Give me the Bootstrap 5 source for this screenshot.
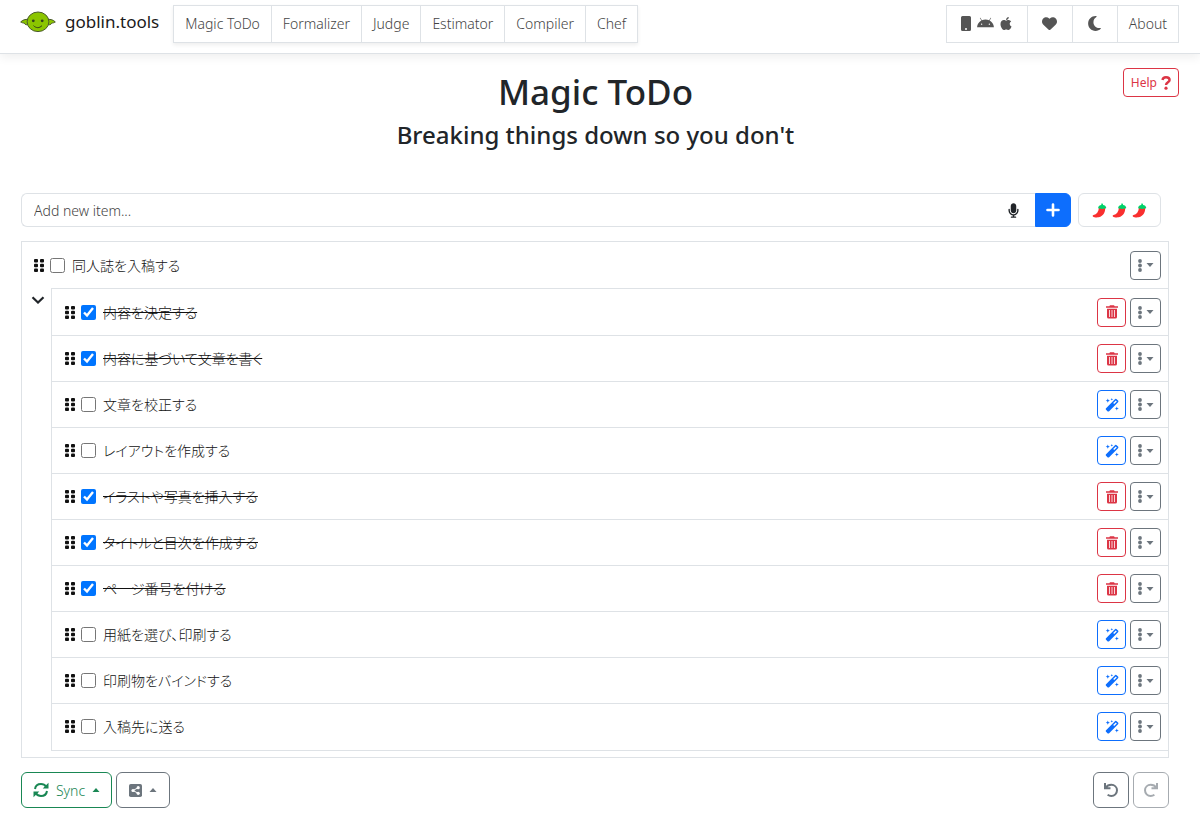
<!DOCTYPE html>
<html lang="en">
<head>
<meta charset="utf-8">
<meta name="viewport" content="width=device-width, initial-scale=1">
<title>Magic ToDo - goblin.tools</title>
<link href="https://cdn.jsdelivr.net/npm/bootstrap@5.3.0/dist/css/bootstrap.min.css" rel="stylesheet">
<style>
  body { font-family: "Noto Sans", "Noto Sans CJK JP", sans-serif; font-size: 14px; }
  svg { display: block; fill: currentColor; }
  .topbar { height: 54px; padding: 5px 21px 0 20px; box-shadow: 0 3px 10px rgba(0,0,0,.07); }
  .brand-link { font-size: 17px; line-height: 34px; color: #1a1a1a; gap: 9px; margin-right: 14px; }
  .tab-link { height: 38px; padding: 0 11px 2px; border: 1px solid #dee2e6; color: #444; font-weight: 300; background: #fff; display: flex; align-items: center; justify-content: center; gap: 6px; text-decoration: none; }
  .tab-link + .tab-link { margin-left: -1px; }
  .tab-group { box-shadow: 0 2px 4px rgba(0,0,0,.07); }
  .tab-icon { width: 46px; color: #555; }
  .tab-wide { width: 82px; color: #555; }
  .page-title { font-size: 35px; line-height: 44px; font-weight: 500; }
  .page-sub { font-size: 24px; line-height: 34px; font-weight: 500; }
  .title-block { padding: 16px 9px 0 0; margin-bottom: 41px; }
  .help-btn { top: 14px; right: 21px; height: 29px; font-size: 12px; padding: 0 7px; gap: 4px; }
  .page-body { padding: 0 31px 0 21px; }
  .entry-row { margin-right: 8px; height: 34px; }
  .entry-box { border: 1px solid #dee2e6; border-radius: 6px 0 0 6px; border-right: 0; }
  .entry-box input { font-size: 14px; font-weight: 300; padding: 0 12px; border: 0; background: none; box-shadow: none !important; }
  .entry-box input::placeholder { color: #444; }
  .add-btn { width: 36px; border-radius: 0 6px 6px 0; margin-right: 7px; }
  .spice-btn { width: 83px; border: 1px solid #dee2e6; border-radius: 6px; gap: 5px; }
  .task-list { border: 1px solid #dee2e6; margin-top: 14px; padding-bottom: 6px; }
  .task-line { height: 46px; padding-left: 12px; padding-right: 7px; }
  .task-line label { font-feature-settings: "palt", "kern"; font-family: "Noto Sans CJK JP", sans-serif; font-weight: 300; font-size: 14px; margin-left: 7px; color: #111; }
  .task-line input[type=checkbox] { width: 15px; height: 15px; margin: 0 0 0 5px; accent-color: #0075ff; }
  .grip { width: 11px; height: 13px; color: #111; }
  .sub-list { border: 1px solid #dee2e6; border-right: 0; padding-bottom: 1px; }
  .sub-list .task-line { padding-left: 13px; }
  .sub-list .task-line + .task-line { border-top: 1px solid #dee2e6; }
  .fold-btn { width: 29px; padding: 8px 0 0 9px; }
  .done-text { text-decoration: line-through; }
  .icon-btn { width: 29px; height: 29px; border-radius: 4px; }
  .more-btn { width: 31px; height: 29px; border-radius: 4px; margin-left: 4px; gap: 4px; }
  .foot-row { margin-top: 14px; padding-bottom: 24px; }
  .foot-btn { height: 36px; border-radius: 6px; font-size: 14px; font-weight: 300; }
  .foot-btn.sync { width: 91px; gap: 7px; }
  .foot-btn.share { width: 54px; gap: 7px; }
  .foot-btn.square { width: 36px; }
  .foot-btn.square:disabled { opacity: .6; }
  .centered { display: flex; align-items: center; justify-content: center; padding: 0; }
</style>
</head>
<body>
<svg class="d-none" aria-hidden="true">
  <symbol id="i-grip" viewBox="0 0 11 13"><rect width="4" height="3.4" rx="1"/><rect x="6" width="4" height="3.4" rx="1"/><rect y="4.8" width="4" height="3.4" rx="1"/><rect x="6" y="4.8" width="4" height="3.4" rx="1"/><rect y="9.6" width="4" height="3.4" rx="1"/><rect x="6" y="9.6" width="4" height="3.4" rx="1"/></symbol>
  <symbol id="i-dots" viewBox="0 0 4 13"><circle cx="2" cy="2" r="1.9"/><circle cx="2" cy="6.5" r="1.9"/><circle cx="2" cy="11" r="1.9"/></symbol>
  <symbol id="i-down" viewBox="0 0 8 4"><path d="M.5 0h7L4 4z"/></symbol>
  <symbol id="i-up" viewBox="0 0 8 4"><path d="M.5 4h7L4 0z"/></symbol>
  <symbol id="i-trash" viewBox="0 0 12 14"><path fill-rule="evenodd" d="M4 .2h4l.7 1H12v1.600H0V1.200h3.300zM1 3.700h10v8.300a1.600 1.600 0 0 1-1.600 1.600H2.600A1.600 1.600 0 0 1 1 12zM3.200 5v7h.8V5zm2.400 0v7h.8V5zM8 5v7h.8V5z"/></symbol>
  <symbol id="i-wand" viewBox="0 0 14 14"><path fill-rule="evenodd" d="M9.700 1.400a1.500 1.500 0 0 1 2.200 0l.9.900a1.500 1.500 0 0 1 0 2.200L4.400 13a1.500 1.500 0 0 1-2.200 0l-.9-.9a1.500 1.500 0 0 1 0-2.200zM10.800 2.500 8.200 5.100l1 1L11.800 3.500z"/><path d="m2.800.6.6 1.500 1.500.6-1.500.6-.6 1.500-.6-1.500-1.500-.6 1.500-.6zM6.800 0l.4.9.9.4-.9.4-.4.9-.4-.9-.9-.4.9-.4zM11.800 8.400l.6 1.500 1.500.6-1.500.6-.6 1.500-.6-1.500-1.500-.6 1.500-.6z"/></symbol>
  <symbol id="i-pepper" viewBox="0 0 14 15"><path fill="#f92f2f" d="M6.500 4.500 12.500 4.600c.8 4-1.500 8.800-6.200 9.700C3.800 14.700 1.300 14.300.4 13.500c-.5-.5-.1-1.300.6-1.400C4.200 11.600 6 9 6.500 4.500z"/><path fill="#00d26a" d="M8.800.7c.9-.5 1.800 0 1.700 1.200 1.700.1 3 1.200 3.200 2.700.1 1-.9 1.300-1.700.7-.6.900-1.600.9-2.200.1-.7.900-1.700.8-2.200-.1-.9.700-2.100.3-1.900-.7.300-1.500 1.500-2.500 3.100-2.600z"/></symbol>
</svg>

<header class="topbar d-flex align-items-start border-bottom bg-white">
  <a href="#" class="brand-link d-flex align-items-center text-decoration-none">
    <svg width="36" height="22" viewBox="0 0 36 22" aria-hidden="true"><g fill="#8bc500" stroke="#4a5a2c" stroke-width="1"><path d="M8 8.500C5.500 8 2.500 9 .7 11c1.500 1 2.600.9 3.600 1.200C5.200 14 7 14.200 9 13zM28 8.500c2.500-.5 5.500.5 7.300 2.500-1.500 1-2.600.9-3.600 1.200C30.800 14 29 14.200 27 13z"/><ellipse cx="18" cy="10.800" rx="10.900" ry="9.800"/></g><circle cx="13.300" cy="9.800" r="1.400" fill="#33421a"/><circle cx="22.200" cy="9.800" r="1.400" fill="#33421a"/><path d="M13.500 14.600c2.500 2.700 6 2.700 8.500 0" fill="none" stroke="#33421a"/></svg>
    <span>goblin.tools</span>
  </a>
  <nav class="tab-group d-flex" aria-label="Tools">
    <a class="tab-link" href="#">Magic ToDo</a><a class="tab-link" href="#">Formalizer</a><a class="tab-link" href="#">Judge</a><a class="tab-link" href="#">Estimator</a><a class="tab-link" href="#">Compiler</a><a class="tab-link" href="#">Chef</a>
  </nav>
  <nav class="d-flex ms-auto" aria-label="Site">
    <a class="tab-link tab-wide" href="#" aria-label="Apps">
      <svg width="10" height="15" viewBox="0 0 10 15"><path fill-rule="evenodd" d="M1.500 0h7A1.500 1.500 0 0 1 10 1.500v12A1.500 1.500 0 0 1 8.500 15h-7A1.500 1.500 0 0 1 0 13.500v-12A1.500 1.500 0 0 1 1.500 0zM5 12a1 1 0 1 0 0 2 1 1 0 0 0 0-2z"/></svg>
      <svg width="17" height="15" viewBox="0 0 576 512"><path d="M420.550 301.930a24 24 0 1 1 24-24 24 24 0 0 1-24 24m-265.100 0a24 24 0 1 1 24-24 24 24 0 0 1-24 24m273.700-144.480 47.940-83a10 10 0 1 0-17.270-10l-48.540 84.070a301.250 301.250 0 0 0-246.560 0L116.180 64.450a10 10 0 1 0-17.270 10l47.940 83C64.530 202.220 8.240 285.550 0 384H576c-8.240-98.450-64.540-181.780-146.850-226.550"/></svg>
      <svg width="12" height="15" viewBox="0 0 384 512"><path d="M318.700 268.700c-.2-36.700 16.400-64.400 50-84.800-18.800-26.900-47.200-41.700-84.700-44.600-35.500-2.800-74.300 20.700-88.500 20.700-15 0-49.400-19.700-76.400-19.700C63.300 141.200 4 184.800 4 273.500q0 39.300 14.400 81.200c12.800 36.700 59 126.700 107.200 125.200 25.200-.6 43-17.900 75.800-17.900 31.800 0 48.300 17.900 76.400 17.900 48.600-.7 90.400-82.500 102.600-119.300-65.200-30.700-61.700-90-61.700-91.900zm-56.600-164.200c27.300-32.400 24.800-61.900 24-72.500-24.100 1.400-52 16.400-67.900 34.900-17.500 19.800-27.800 44.300-25.600 71.900 26.100 2 49.900-11.400 69.500-34.300z"/></svg>
    </a><a class="tab-link tab-icon" href="#" aria-label="Support">
      <svg width="15" height="15" viewBox="0 0 512 512"><path d="M47.600 300.400 228.300 469.100c7.500 7 17.400 10.900 27.700 10.900s20.200-3.900 27.700-10.900L464.400 300.400c30.400-28.300 47.600-68 47.600-109.500v-5.800c0-69.900-50.500-129.500-119.400-141C347 36.500 300.600 51.400 268 84L256 96 244 84c-32.600-32.600-79-47.500-124.600-39.900C50.500 55.600 0 115.200 0 185.100v5.800c0 41.500 17.200 81.200 47.600 109.500z"/></svg>
    </a><a class="tab-link tab-icon" href="#" aria-label="Dark mode">
      <svg width="13" height="17" viewBox="0 0 384 512"><path d="M223.500 32C100 32 0 132.300 0 256s100 224 223.500 224c60.600 0 115.500-24.200 155.800-63.400 5-4.900 6.300-12.500 3.100-18.700s-10.100-9.700-17-8.500c-9.800 1.700-19.800 2.600-30.100 2.600-96.900 0-175.500-78.800-175.500-176 0-65.800 36-123.100 89.300-153.300 6.100-3.500 9.200-10.500 7.700-17.300s-7.300-11.900-14.300-12.500c-6.300-.5-12.600-.8-19-.8z"/></svg>
    </a><a class="tab-link" href="#">About</a>
  </nav>
</header>

<main class="position-relative">
  <button type="button" class="btn btn-outline-danger help-btn position-absolute d-flex align-items-center rounded-1">Help
    <svg width="10" height="14" viewBox="0 0 10 14" aria-hidden="true"><path d="M1.500 4C1.700 2.200 3 1.200 5 1.200s3.600 1.100 3.600 2.800C8.600 6.200 5 6.300 5 9" fill="none" stroke="currentColor" stroke-width="2.400"/><circle cx="5" cy="12.200" r="1.600"/></svg>
  </button>
  <div class="title-block text-center">
    <h1 class="page-title mb-0">Magic ToDo</h1>
    <h2 class="page-sub mt-1 mb-0">Breaking things down so you don't</h2>
  </div>

  <div class="page-body">
    <form class="entry-row d-flex">
      <div class="entry-box d-flex align-items-center flex-grow-1">
        <input type="text" class="form-control" placeholder="Add new item..." aria-label="Add new item">
        <button type="button" class="btn border-0 p-0 me-3" aria-label="Dictate">
          <svg width="11" height="15" viewBox="0 0 384 512"><path d="M192 0c-53 0-96 43-96 96v160c0 53 43 96 96 96s96-43 96-96V96c0-53-43-96-96-96zM64 216c0-13.300-10.700-24-24-24s-24 10.700-24 24v40c0 89.100 66.200 162.700 152 174.400V464h-48c-13.300 0-24 10.700-24 24s10.700 24 24 24h144c13.300 0 24-10.700 24-24s-10.700-24-24-24h-48v-33.600c85.800-11.700 152-85.300 152-174.400v-40c0-13.300-10.700-24-24-24s-24 10.700-24 24v40c0 70.700-57.300 128-128 128S64 326.700 64 256v-40z"/></svg>
        </button>
      </div>
      <button type="submit" class="btn btn-primary add-btn centered" aria-label="Add">
        <svg width="14" height="14" viewBox="0 0 14 14"><path d="M7 1.500v11M1.500 7h11" stroke="currentColor" stroke-width="2.600" stroke-linecap="round"/></svg>
      </button>
      <button type="button" class="btn spice-btn centered" aria-label="Spiciness level">
        <svg width="15" height="15"><use href="#i-pepper"/></svg><svg width="15" height="15"><use href="#i-pepper"/></svg><svg width="15" height="15"><use href="#i-pepper"/></svg>
      </button>
    </form>

    <section class="task-list" lang="ja">
      <div id="parent"></div>
      <div class="d-flex align-items-start">
        <button type="button" class="btn border-0 fold-btn flex-shrink-0" aria-label="Collapse">
          <svg width="14" height="8" viewBox="0 0 14 8"><path d="m1.500 1.200 5.500 5.300 5.500-5.300" fill="none" stroke="currentColor" stroke-width="2.200"/></svg>
        </button>
        <div class="sub-list flex-grow-1" id="children"></div>
      </div>
    </section>

    <footer class="foot-row d-flex">
      <button type="button" class="btn btn-outline-success foot-btn sync centered me-1">
        <svg width="16" height="16" viewBox="0 0 16 16"><path d="M2 7C2.500 3.700 5 2 8 2c2.300 0 4 1 5.300 2.800M14 9c-.5 3.300-3 5-6 5-2.300 0-4-1-5.300-2.800" fill="none" stroke="currentColor" stroke-width="2"/><path d="M15.500.8v5.800H9.700zM.5 15.200V9.400h5.800z"/></svg>
        Sync
        <svg width="8" height="4"><use href="#i-up"/></svg>
      </button>
      <button type="button" class="btn btn-outline-secondary foot-btn share centered" aria-label="Share">
        <svg width="13" height="13" viewBox="0 0 13 13"><rect width="13" height="13" rx="1.800"/><path d="M9.200 3.700 4 6.500l5.200 2.800" fill="none" stroke="#fff"/><g fill="#fff"><circle cx="9.200" cy="3.700" r="1.600"/><circle cx="4" cy="6.500" r="1.600"/><circle cx="9.200" cy="9.300" r="1.600"/></g></svg>
        <svg width="8" height="4"><use href="#i-up"/></svg>
      </button>
      <button type="button" class="btn btn-outline-secondary foot-btn square centered ms-auto me-1" aria-label="Undo">
        <svg width="16" height="16" viewBox="0 0 16 16"><path d="M2 1v5.300h5.500M2.600 5.800C4 3.700 6 2.800 8.300 2.800c3.200 0 5.700 2.300 5.700 5.500s-2.500 5.700-5.700 5.700c-1.400 0-2.600-.4-3.700-1.200" fill="none" stroke="currentColor" stroke-width="2"/></svg>
      </button>
      <button type="button" class="btn btn-outline-secondary foot-btn square centered" aria-label="Redo" disabled>
        <svg width="16" height="16" viewBox="0 0 16 16"><path d="M14 1v5.300H8.500M13.400 5.800C12 3.700 10 2.800 7.700 2.800 4.500 2.800 2 5.100 2 8.300S4.500 14 7.700 14c1.400 0 2.600-.4 3.700-1.200" fill="none" stroke="currentColor" stroke-width="2"/></svg>
      </button>
    </footer>
  </div>
</main>

<script src="https://cdn.jsdelivr.net/npm/bootstrap@5.3.0/dist/js/bootstrap.bundle.min.js"></script>
<script>
  const steps = [
    ["内容を決定する", true], ["内容に基づいて文章を書く", true], ["文章を校正する", false],
    ["レイアウトを作成する", false], ["イラストや写真を挿入する", true], ["タイトルと目次を作成する", true],
    ["ページ番号を付ける", true], ["用紙を選び、印刷する", false], ["印刷物をバインドする", false], ["入稿先に送る", false]
  ];
  const deleteButton = `<button type="button" class="btn btn-outline-danger icon-btn centered" aria-label="Delete"><svg width="12" height="14"><use href="#i-trash"/></svg></button>`;
  const breakButton = `<button type="button" class="btn btn-outline-primary icon-btn centered" aria-label="Break down"><svg width="14" height="14"><use href="#i-wand"/></svg></button>`;
  const line = (text, done, id, action) => `
    <div class="task-line d-flex align-items-center">
      <svg class="grip"><use href="#i-grip"/></svg>
      <input type="checkbox" id="${id}" ${done ? "checked" : ""}>
      <label for="${id}" class="me-auto ${done ? "done-text" : ""}">${text}</label>
      ${action}
      <button type="button" class="btn btn-outline-secondary more-btn centered" aria-label="More"><svg width="4" height="13"><use href="#i-dots"/></svg><svg width="8" height="4"><use href="#i-down"/></svg></button>
    </div>`;
  document.getElementById("parent").innerHTML = line("同人誌を入稿する", false, "task", "");
  document.getElementById("children").innerHTML =
    steps.map(([text, done], i) => line(text, done, "step" + i, done ? deleteButton : breakButton)).join("");
</script>
</body>
</html>
